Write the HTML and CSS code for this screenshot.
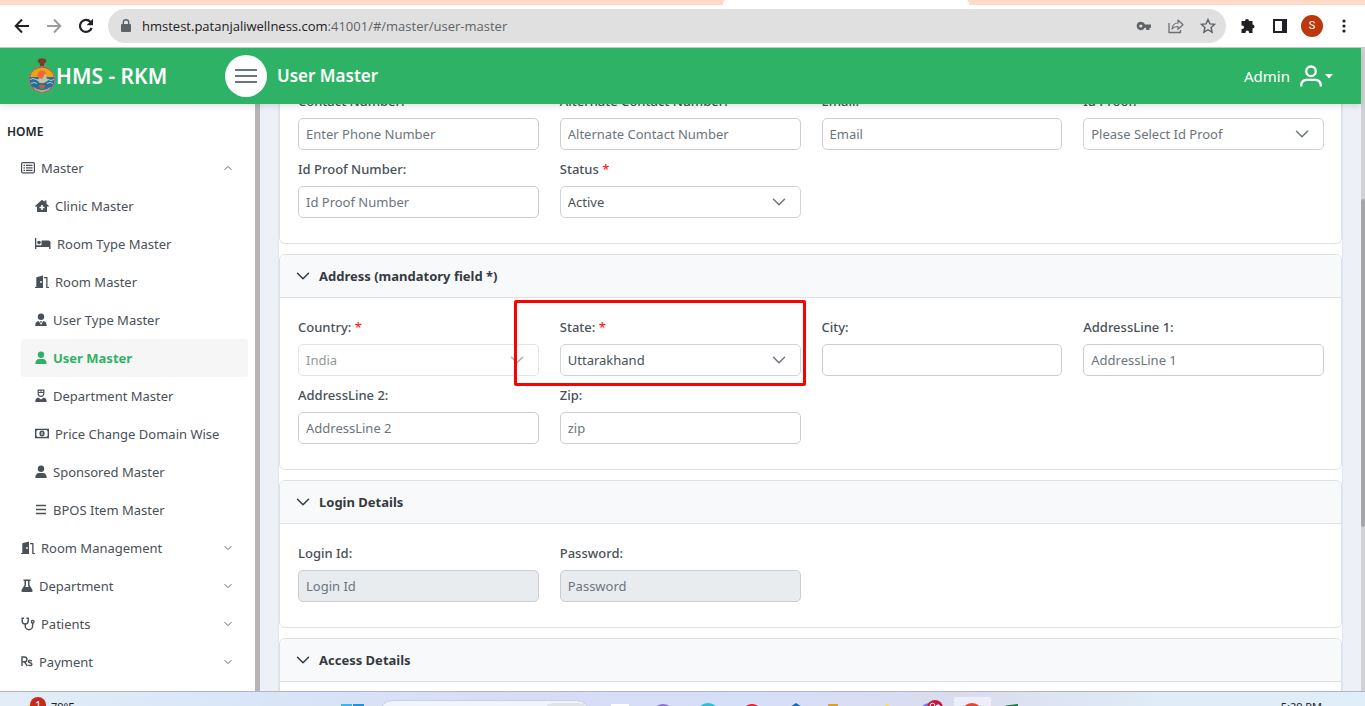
FILE: index.html
```html
<!DOCTYPE html>
<html lang="en">
<head>
<meta charset="utf-8">
<title>User Master</title>
<link rel="stylesheet" href="styles.css">
</head>
<body>
<svg class="sprite" aria-hidden="true">
  <symbol id="chev" viewBox="0 0 14 14"><path d="M1.500 4.300 7 9.800l5.500-5.500" fill="none" stroke="currentColor" stroke-width="1.500" stroke-linecap="round" stroke-linejoin="round"/></symbol>
  <symbol id="door" viewBox="0 0 14 14"><path d="M0 12h1.300V2.200L8 .5V13H0zM9 2h3.500v10H14v1h-2.800V3.300H9z" fill="currentColor"/><circle cx="6" cy="7" r=".9" fill="#fff"/></symbol>
  <symbol id="person" viewBox="0 0 12 14"><circle cx="6" cy="3.700" r="3.200" fill="currentColor"/><path d="M.3 13c0-3.500 1.700-5 3.700-5h4c2 0 3.700 1.500 3.700 5z" fill="currentColor"/></symbol>
</svg>

<div class="tabstrip"><span class="tab"></span></div>
<div class="toolbar">
  <button class="tool" aria-label="Back"><svg width="16" height="16" viewBox="0 0 16 16"><path d="M15 8H2M8 1.500 1.700 8 8 14.500" fill="none" stroke="#202124" stroke-width="2"/></svg></button>
  <button class="tool" aria-label="Forward"><svg width="16" height="16" viewBox="0 0 16 16"><path d="M1 8h13M8 1.500 14.300 8 8 14.500" fill="none" stroke="#9b9b9b" stroke-width="2"/></svg></button>
  <button class="tool" aria-label="Reload"><svg width="16" height="16" viewBox="0 0 16 16"><path d="M13.600 10A6 6 0 1 1 12.500 4" fill="none" stroke="#202124" stroke-width="2.200"/><path d="M15 .8v6.400H8.600z" fill="#202124"/></svg></button>
  <div class="address">
    <svg width="10" height="14" viewBox="0 0 10 14"><path d="M1 5h8q1 0 1 1v6q0 1-1 1H1q-1 0-1-1V6q0-1 1-1z" fill="#5f6368"/><path d="M2.300 6V3.500a2.700 2.700 0 0 1 5.400 0V6" fill="none" stroke="#5f6368" stroke-width="1.400"/></svg>
    <span class="url">hmstest.patanjaliwellness.com<span class="path">:41001/#/master/user-master</span></span>
    <button class="mini" aria-label="Passwords"><svg width="16" height="16" viewBox="0 0 16 16"><path d="M4.800 3.700a4.200 4.200 0 0 1 4 2.800H15v3.200h-1.500V12h-3.300V9.700H8.700A4.200 4.200 0 1 1 4.800 3.700zm0 2.700a1.600 1.600 0 1 0 0 3.200 1.600 1.600 0 0 0 0-3.200z" fill="#5f6368" fill-rule="evenodd"/></svg></button>
    <button class="mini" aria-label="Share"><svg width="16" height="16" viewBox="0 0 16 16"><path d="M1 5v9.500h11.500V12" fill="none" stroke="#6b6e72" stroke-width="1.300"/><path d="M4 11c.5-4 3-6 6-6V2l5 4.700-5 4.600V8.500c-2.700 0-4.500.5-6 2.500z" fill="none" stroke="#6b6e72" stroke-width="1.200" stroke-linejoin="round"/></svg></button>
    <button class="mini" aria-label="Bookmark"><svg width="16" height="16" viewBox="0 0 16 16"><path d="m8 1.500 1.900 4.400 4.800.4-3.600 3.200 1 4.700L8 11.700l-4.100 2.500 1-4.700-3.600-3.200 4.800-.4z" fill="none" stroke="#5f6368" stroke-width="1.400"/></svg></button>
  </div>
  <button class="ext" aria-label="Extensions"><svg width="16" height="16" viewBox="0 0 16 16"><path d="M5 3a2 2 0 0 1 4 0h3.500v3.500a2 2 0 0 1 0 4V15H9v-.8a1.700 1.700 0 0 0-3.400 0V15H1.500v-4h.8a1.700 1.700 0 0 0 0-3.400h-.8V3z" fill="#202124"/></svg></button>
  <button class="ext" aria-label="Side panel"><svg width="14" height="14" viewBox="0 0 14 14"><path d="M0 0h14v14H0zm2 2v10h7V2z" fill="#202124" fill-rule="evenodd"/></svg></button>
  <button class="avatar">S</button>
  <button class="dots" aria-label="Menu"><svg width="4" height="14" viewBox="0 0 4 14"><g fill="#202124"><circle cx="2" cy="2" r="1.600"/><circle cx="2" cy="7" r="1.600"/><circle cx="2" cy="12" r="1.600"/></g></svg></button>
</div>

<div class="page">
  <div class="app">
    <header class="topbar">
      <a class="brand" href="#">
        <svg width="28" height="36" viewBox="0 0 28 36"><path d="M10.500 1 14 .3l3.500.7 1 2.500L16 6v4h-4V6L9.500 3.500z" fill="#7b3b25"/><circle cx="14" cy="21.500" r="13" fill="#2b6c9a" stroke="#a87a63" stroke-width="1.200"/><path d="M2 19a12.300 12.300 0 0 1 24 0z" fill="#f0a30f"/><circle cx="14" cy="17" r="4.500" fill="#f2673a"/><path d="M2 21.500q3-2 6 0t6 0 6 0 6 0M3 25.500q3-2 6 0M19 25.500q3-2 6 0" fill="none" stroke="#a9cbd9" stroke-width="1"/><path d="M9 22q2-3 5-1l3-5q3 0 1 2.500l2 4q-4 4-9 2z" fill="#bcc4a4"/><path d="M11 27h6l-1 4h-4z" fill="#e2512d"/><path d="M5 28.500q1 4 8 5.500h2q7-1.500 8-5.500-3 3-8 3.500h-2q-5-.5-8-3.500z" fill="#c9a57c"/><path d="M12 29.500h4V31h-4z" fill="#3c9a4b"/></svg>
        <span>HMS - RKM</span>
      </a>
      <button class="burger" aria-label="Toggle menu"><svg width="22" height="16" viewBox="0 0 22 16"><path d="M0 2h22M0 8h22M0 14h22" stroke="#6b7488" stroke-width="2"/></svg></button>
      <h1>User Master</h1>
      <button class="account"><span>Admin</span>
        <svg width="22" height="22" viewBox="0 0 22 22"><g fill="none" stroke="#fff" stroke-width="2.300"><circle cx="11" cy="6.300" r="4.800"/><path d="M1.200 21.500v-1.700q.5-4.500 5-5h9.600q4.500.5 5 5v1.700"/></g></svg>
        <svg width="8" height="5" viewBox="0 0 8 5"><path d="M0 0h8L4 4.500z" fill="#fff"/></svg>
      </button>
    </header>
    <div class="body">
      <nav class="side">
        <h2>HOME</h2>
        <ul>
          <li><a href="#"><svg width="14" height="14" viewBox="0 0 14 14"><rect x=".6" y="1.600" width="12.800" height="10.300" rx="1.200" fill="none" stroke="currentColor" stroke-width="1.200"/><path d="M2.500 4.300H4m1 0h6.500M2.500 6.800H4m1 0h6.500M2.500 9.300H4m1 0h6.500" stroke="currentColor" stroke-width="1.200"/></svg>Master<svg class="arrow up" width="8" height="8"><use href="#chev"/></svg></a></li>
          <li class="sub"><a href="#"><svg width="14" height="14" viewBox="0 0 14 14"><path d="M7 .8 0 7l.8 1L2 7.200V13h10V7.200l1.200.8.800-1-2.500-2.200V1.500h-2v1.300z" fill="currentColor"/><path d="M7 6v5M4.500 8.500h5" stroke="#fff" stroke-width="1.500"/></svg>Clinic Master</a></li>
          <li class="sub"><a href="#"><svg width="16" height="14" viewBox="0 0 16 14"><path d="M0 1h1.300v7.300H6.500V3.500h7q2 0 2 2V12h-1.400v-2H1.300v2H0z" fill="currentColor"/><circle cx="4" cy="5.500" r="1.800" fill="currentColor"/></svg>Room Type Master</a></li>
          <li class="sub"><a href="#"><svg width="14" height="14"><use href="#door"/></svg>Room Master</a></li>
          <li class="sub"><a href="#"><svg width="12" height="14" viewBox="0 0 12 14"><circle cx="6" cy="3.700" r="3.200" fill="currentColor"/><path d="M.3 13c0-3.500 1.500-4.700 3.500-5L6 12l2.200-4c2 .3 3.500 1.500 3.500 5z" fill="currentColor"/><path d="M5.200 8h1.600l-.4 2h-.8z" fill="currentColor"/></svg>User Type Master</a></li>
          <li class="sub"><a class="active" href="#"><svg width="12" height="14"><use href="#person"/></svg>User Master</a></li>
          <li class="sub"><a href="#"><svg width="12" height="14" viewBox="0 0 12 14"><path d="M3.200 1.200h5.600v3.300a2.800 2.800 0 0 1-5.600 0z" fill="none" stroke="currentColor" stroke-width="1.200"/><path d="M3 3.500h6M6 1.500v1.800" stroke="currentColor"/><path d="M.3 13c0-3 1.200-4 3-4.500L6 10.500l2.700-2c1.800.5 3 1.500 3 4.500z" fill="currentColor"/></svg>Department Master</a></li>
          <li class="sub"><a href="#"><svg width="14" height="14" viewBox="0 0 14 14"><rect x=".7" y="2.400" width="12.600" height="8.200" fill="none" stroke="currentColor" stroke-width="1.400"/><path d="M.7 4.400 2.700 2.400M13.300 4.400l-2-2M.7 8.600l2 2M13.300 8.600l-2 2" stroke="currentColor"/><ellipse cx="7" cy="6.500" rx="2.600" ry="2.900" fill="currentColor"/><path d="M7 5v3" stroke="#fff"/></svg>Price Change Domain Wise</a></li>
          <li class="sub"><a href="#"><svg width="12" height="14"><use href="#person"/></svg>Sponsored Master</a></li>
          <li class="sub"><a href="#"><svg width="12" height="14" viewBox="0 0 12 14"><path d="M1 2.500h10M1 6.500h10M1 10.500h10" stroke="currentColor" stroke-width="1.400"/></svg>BPOS Item Master</a></li>
          <li><a href="#"><svg width="14" height="14"><use href="#door"/></svg>Room Management<svg class="arrow" width="8" height="8"><use href="#chev"/></svg></a></li>
          <li><a href="#"><svg width="12" height="14" viewBox="0 0 12 14"><path d="M2.500.5h7V2h-1v4l3 5q.5 2-1 2h-9q-1.500 0-1-2l3-5V2h-1z" fill="currentColor"/><path d="M5 2h2v4.300L7.800 8H4.200L5 6.300z" fill="#fff"/></svg>Department<svg class="arrow" width="8" height="8"><use href="#chev"/></svg></a></li>
          <li><a href="#"><svg width="14" height="14" viewBox="0 0 14 14"><g fill="none" stroke="currentColor" stroke-width="1.400"><path d="M3 1.200H1.200V4a3 3 0 0 0 6 0V1.200H5.500M4.200 7v2a3.700 3.700 0 0 0 7.400 0V6"/><circle cx="11.700" cy="4.700" r="1.300"/></g></svg>Patients<svg class="arrow" width="8" height="8"><use href="#chev"/></svg></a></li>
          <li><a href="#"><svg width="12" height="14" viewBox="0 0 12 14"><path d="M1 11V2h2.500a2.300 2.300 0 0 1 0 4.800H1M3.500 6.800 6.300 11M10.900 5.800q-3.400-1-3.400.7 0 .9 1.600 1.300 1.800.4 1.800 1.500 0 2-3.700.8" fill="none" stroke="currentColor" stroke-width="1.400"/></svg>Payment<svg class="arrow" width="8" height="8"><use href="#chev"/></svg></a></li>
        </ul>
      </nav>
      <main>
        <form class="panel">
          <section class="card first">
            <div class="fields">
              <div class="field"><label for="phone">Contact Number:</label><input id="phone" placeholder="Enter Phone Number"></div>
              <div class="field"><label for="alt">Alternate Contact Number:</label><input id="alt" placeholder="Alternate Contact Number"></div>
              <div class="field"><label for="email">Email:</label><input id="email" placeholder="Email"></div>
              <div class="field"><label for="proof">Id Proof:</label><div class="pick"><select id="proof" class="empty"><option>Please Select Id Proof</option></select><svg width="14" height="14"><use href="#chev"/></svg></div></div>
              <div class="field"><label for="proofno">Id Proof Number:</label><input id="proofno" placeholder="Id Proof Number"></div>
              <div class="field"><label for="status">Status <i>*</i></label><div class="pick"><select id="status"><option>Active</option></select><svg width="14" height="14"><use href="#chev"/></svg></div></div>
            </div>
          </section>
          <section class="card">
            <h3><button type="button"><svg width="14" height="14"><use href="#chev"/></svg>Address (mandatory field *)</button></h3>
            <div class="fields">
              <div class="field"><label for="country">Country: <i>*</i></label><div class="pick off"><select id="country" disabled><option>India</option></select><svg width="14" height="14"><use href="#chev"/></svg></div></div>
              <div class="field marked"><label for="state">State: <i>*</i></label><div class="pick"><select id="state"><option>Uttarakhand</option></select><svg width="14" height="14"><use href="#chev"/></svg></div></div>
              <div class="field"><label for="city">City:</label><input id="city"></div>
              <div class="field"><label for="line1">AddressLine 1:</label><input id="line1" placeholder="AddressLine 1"></div>
              <div class="field"><label for="line2">AddressLine 2:</label><input id="line2" placeholder="AddressLine 2"></div>
              <div class="field"><label for="zip">Zip:</label><input id="zip" placeholder="zip"></div>
            </div>
          </section>
          <section class="card">
            <h3><button type="button"><svg width="14" height="14"><use href="#chev"/></svg>Login Details</button></h3>
            <div class="fields">
              <div class="field"><label for="login">Login Id:</label><input id="login" placeholder="Login Id" disabled></div>
              <div class="field"><label for="pass">Password:</label><input id="pass" type="password" placeholder="Password" disabled></div>
            </div>
          </section>
          <section class="card">
            <h3><button type="button"><svg width="14" height="14"><use href="#chev"/></svg>Access Details</button></h3>
            <div class="fields"></div>
          </section>
        </form>
      </main>
    </div>
  </div>
  <div class="scroll"><span></span></div>
</div>

<footer class="taskbar">
  <div class="weather"><svg width="24" height="14" viewBox="0 0 24 14"><circle cx="9" cy="16" r="8" fill="#f9c513"/><circle cx="16" cy="8" r="8" fill="#c42b1c"/></svg><b>1</b><span>79°F</span></div>
  <svg class="win" width="23" height="12" viewBox="0 0 23 12"><path d="M0 0h11v12H0z" fill="#3db5ea"/><path d="M12 0h11v12H12z" fill="#1e93dc"/></svg>
  <div class="search"><span></span></div>
  <div class="apps">
    <svg viewBox="0 0 44 14"><path d="M13 12h18v2H13z" fill="#fff"/></svg>
    <svg viewBox="0 0 44 14"><circle cx="21" cy="23" r="11" fill="#8878c9"/></svg>
    <svg viewBox="0 0 44 14"><circle cx="22" cy="23" r="12" fill="#30bfcf"/></svg>
    <svg viewBox="0 0 44 14"><circle cx="22" cy="22" r="10" fill="#e81932"/></svg>
    <svg viewBox="0 0 44 14"><path d="m22 11 6 4H16z" fill="#1368b8"/></svg>
    <svg viewBox="0 0 44 14"><rect x="10" y="12" width="10" height="6" rx="1" fill="#d9a02b"/></svg>
    <svg viewBox="0 0 44 14"><path d="m25 11 3 5h-6z" fill="#fbe23a"/></svg>
    <svg viewBox="0 0 44 14"><circle cx="23" cy="20" r="9" fill="#7479df"/><circle cx="29" cy="16" r="8" fill="#c8193c"/><g fill="none" stroke="#fff"><circle cx="26.500" cy="13.500" r="2.300"/><path d="M30 13.500h4M32 12v3"/></g></svg>
    <svg viewBox="0 0 44 14"><rect x="3.500" y="4.500" width="38" height="30" rx="3" fill="#eceffa" stroke="#dcdfee"/><circle cx="22" cy="22" r="11" fill="#e94235"/></svg>
    <svg viewBox="0 0 44 14"><path d="M12 13.500 24 12v4H10z" fill="#1c7044"/></svg>
  </div>
  <time>5:29 PM</time>
</footer>
</body>
</html>
```
FILE: styles.css
```css
* { box-sizing: border-box; }
body {
  margin: 0; height: 100vh; overflow: hidden;
  display: flex; flex-direction: column;
  font: 14px/20px "Noto Sans", "Open Sans", sans-serif;
  color: #495057; background: #fff;
}
button, input, select { font: inherit; color: inherit; margin: 0; }
button { border: 0; background: none; padding: 0; display: flex; align-items: center; cursor: pointer; }
a { color: inherit; text-decoration: none; }
svg { flex: none; display: block; }
h1, h2, h3, ul { margin: 0; padding: 0; }
.sprite { position: absolute; width: 0; height: 0; }

.tabstrip { height: 5px; flex: none; background: #fddbc8; display: flex; }
.tab { margin-left: 53%; width: 18%; background: #fff; border-radius: 4px 4px 0 0; }
.toolbar {
  height: 43px; flex: none; display: flex; align-items: center;
  padding: 0 19px 0 14px; border-bottom: 1px solid #c9cbcd; background: #fff;
}
.tool { margin-right: 16px; }
.tool:nth-child(3) { margin-right: 14px; }
.address {
  flex: 1; height: 34px; border-radius: 17px; background: #e0e0e0;
  display: flex; align-items: center; gap: 16px; padding: 0 10px 0 13px;
}
.url { flex: 1; margin-left: -5px; font-family: "Open Sans", "Noto Sans", sans-serif; font-size: 13px; color: #202124; white-space: nowrap; }
.path { color: #5f6368; }
.ext { margin-left: 14px; }
.ext + .ext { margin-left: 17px; }
.avatar {
  width: 22px; height: 22px; border-radius: 50%; background: #bf360c; color: #fff;
  margin: 0 19px 0 14px; justify-content: center; font: 11px/22px Roboto, sans-serif;
}

.page { flex: 1; min-height: 0; display: flex; }
.app { flex: 1; min-width: 0; display: flex; flex-direction: column; }
.scroll { width: 4px; background: #cfd1d6; display: flex; flex-direction: column; }
.scroll span { height: 51%; margin-top: 151px; background: #a4a5a8; border-radius: 2px; }
.topbar {
  position: relative; z-index: 2; height: 56px; flex: none;
  display: flex; align-items: center; padding: 0 28px;
  background: #2eb265; color: #fff; box-shadow: 0 2px 6px rgba(0, 0, 0, .12);
}
.brand { display: flex; align-items: center; width: 197px; font-size: 21px; font-weight: 600; }
.burger { width: 42px; height: 42px; border-radius: 50%; background: #fff; justify-content: center; }
h1 { margin-left: 10px; font-size: 17px; line-height: 24px; font-weight: 600; }
.account { margin-left: auto; font-size: 15px; gap: 3px; }
.account span { margin-right: 7px; }

.body { flex: 1; min-height: 0; display: flex; overflow: hidden; }
.side { width: 260px; flex: none; border-right: 5px solid #b6b4b5; padding: 18px 7px 0; overflow: hidden; font-size: 13px; }
h2 { font-size: 12px; line-height: 20px; font-weight: 600; color: #212529; margin-bottom: 7px; }
.side ul { list-style: none; padding-left: 14px; }
.side a { display: flex; align-items: center; gap: 6px; height: 38px; border-radius: 3px; }
.side .sub a { padding-left: 14px; }
.side a.active { background: #f6f6f6; color: #2eb265; font-weight: 700; }
.arrow { margin: 0 16px 0 auto; }
.arrow.up { transform: rotate(180deg); }

main { flex: 1; min-width: 0; background: #edf1f7; padding: 0 18px; }
.panel {
  margin-top: -14px; background: #fff; border: 1px solid #dee6ee;
  display: flex; flex-direction: column; gap: 10px;
}
.card { border: 1px solid #dee2e6; border-radius: 6px; }
.card h3 { border-bottom: 1px solid #dee2e6; background: #f8f9fb; border-radius: 6px 6px 0 0; font-size: 14px; }
.card h3 button { width: 100%; height: 42px; padding: 0 16px; gap: 9px; font-weight: 700; font-size: 13px; color: #343a40; }
.fields {
  display: grid; grid-template-columns: repeat(4, 1fr); gap: 9px 21px;
  padding: 19px 17px 25px 18px;
}
.first { border-top: 0; }
.first .fields { padding-top: 0; }
.field { display: flex; flex-direction: column; gap: 7px; min-width: 0; font-size: 13px; }
.field label { font-weight: 500; height: 20px; white-space: nowrap; }
.field i { color: red; font-style: normal; font-weight: 400; }
.field input, .field select {
  width: 100%; height: 32px; padding: 0 7px; background: #fff;
  border: 1px solid #cbcdd0; border-radius: 5px; outline: 0; appearance: none;
}
.field input::placeholder { color: #6c757d; opacity: 1; }
.field input:disabled { background: #e9ecef; }
.field select { border-color: #ced4da; opacity: 1; }
.field select.empty { color: #6c757d; }
.pick { position: relative; }
.pick svg { position: absolute; right: 15px; top: 9px; color: #6c757d; pointer-events: none; }
.off { opacity: .6; }
.marked { position: relative; }
.marked::after {
  content: ""; position: absolute; inset: -17px -5px -10px -46px;
  border: 3px solid #fe0000; border-radius: 2px; pointer-events: none;
}

.taskbar {
  height: 15px; flex: none; overflow: hidden; display: flex; align-items: flex-start;
  border-top: 1px solid #b1b6c1; font-size: 11px; color: #222;
  background: linear-gradient(90deg, #e2edf8 0%, #d9e6f7 18%, #d7dcf5 38%, #d6dff8 55%, #dadcee 70%, #e0ecf8 85%, #e0eefa 100%);
}
.weather { width: 25%; flex: none; display: flex; padding-left: 22px; position: relative; }
.weather svg { margin-top: 5px; }
.weather b { position: absolute; left: 35px; top: 3px; color: #fff; font-weight: 400; }
.weather span { margin: 5px 0 0 5px; }
.win { margin-top: 12px; }
.search { width: 213px; height: 30px; margin: 8px 7px 0 14px; background: #f0f4fc; border: 1px solid #c9cfe6; border-radius: 15px; flex: none; }
.search span { display: block; width: 48px; height: 24px; margin: 2px 0 0 auto; border-radius: 12px; background: #e0e3e8; }
.apps { display: flex; }
.apps svg { width: 44px; height: 14px; }
.taskbar time { margin: 5px 43px 0 auto; white-space: nowrap; }
```
